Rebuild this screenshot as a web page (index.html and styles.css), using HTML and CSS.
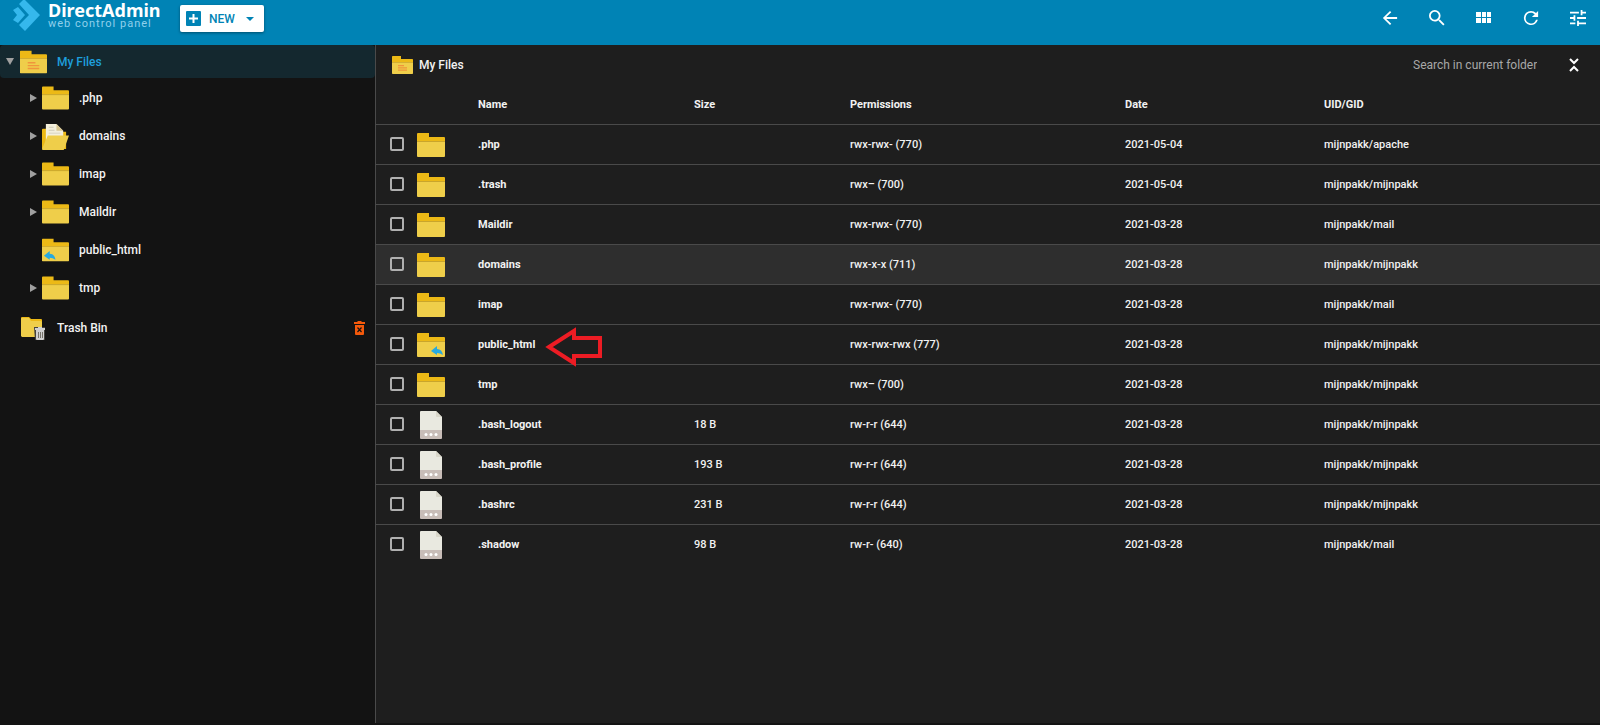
FILE: index.html
```html
<!DOCTYPE html>
<html lang="en">

<head>
	<meta charset="UTF-8">
	<meta name="viewport" content="width=device-width, initial-scale=1.0">
	<title>DirectAdmin - My Files</title>
	<link rel="stylesheet" href="styles.css">
</head>

<body>
	<svg class="sprite" aria-hidden="true">
		<symbol id="folder" viewBox="0 0 28 24">
			<path fill="#ecb916" d="M0 1Q0 0 1 0H12V4H27Q28 4 28 5V9H0Z" />
			<path fill="#efce4a" d="M0 8H28V23Q28 24 27 24H1Q0 24 0 23Z" />
			<path fill="#c9a52c" d="M0 8H28V9H0Z" />
		</symbol>
		<symbol id="folder-home" viewBox="0 0 28 24">
			<use href="#folder" />
			<path fill="#f0953c" d="M8 12H16V13.500H8ZM8 15H20V16.500H8ZM8 18H20V19.500H8Z" />
		</symbol>
		<symbol id="folder-link" viewBox="0 0 28 24">
			<use href="#folder" />
			<path fill="#27a9e0" d="M14 18L20 13V16Q25 16 26 22Q23 20 20 20V22Z" />
		</symbol>
		<symbol id="folder-link-left" viewBox="0 0 28 24">
			<use href="#folder" />
			<path fill="#27a9e0" d="M2 18L8 13V16Q13 16 14 22Q11 20 8 20V22Z" />
		</symbol>
		<symbol id="folder-open" viewBox="0 0 28 28">
			<path fill="#ecb916" d="M0 7Q0 6 1 6H12V9H25V27H1Q0 27 0 26Z" />
			<path fill="#f3efdc" d="M4 1H15L22 8V20H4Z" />
			<path fill="#d8c690" d="M15 1L22 8H15Z" />
			<path fill="#cfcbb8" d="M7 4H12V5H7ZM7 7H13V8H7ZM7 10H19V11H7Z" />
			<path fill="#efce4a" d="M0 27L6 13H28L23 27Q23 28 22 28H1Q0 28 0 27Z" />
		</symbol>
		<symbol id="folder-trash" viewBox="0 0 24 23">
			<path fill="#ecb916" d="M0 1Q0 0 1 0H8L10 2H20Q21 2 21 3V12H0Z" />
			<path fill="#efce4a" d="M0 2Q0 1 1 1H8L10 4H20L21 5V19L20 20H1L0 19Z" />
			<path fill="#44423c" d="M13 10H24V23H14Z" />
			<path fill="#d0d0d0" d="M14 11H17V10H21V11H24V13H14ZM15 13H23V22Q23 23 22 23H16Q15 23 15 22Z" />
			<path fill="#77736a" d="M17 15H18V21H17ZM19 15H20V21H19ZM21 15H22V21H21Z" />
		</symbol>
		<symbol id="file" viewBox="0 0 22 28">
			<path fill="#e9e9e0" d="M1 0H16L22 6V20H0V1Q0 0 1 0Z" />
			<path fill="#d9d7ca" d="M16 0L22 6H17Q16 6 16 5Z" />
			<path fill="#c8bdb8" d="M0 19H22V27Q22 28 21 28H1Q0 28 0 27Z" />
			<circle fill="#fff" cx="6" cy="23.500" r="1.500" />
			<circle fill="#fff" cx="11" cy="23.500" r="1.500" />
			<circle fill="#fff" cx="16" cy="23.500" r="1.500" />
		</symbol>
	</svg>

	<header>
		<a class="logo" href="#">
			<svg width="28" height="32" viewBox="0 0 28 32">
				<path fill="#35b8ec" d="M0 10L5 7L12 15L5 23L0 20L4 15Z" />
				<path fill="#35b8ec" d="M6 4L11 -1L27 15L12 31L6 25L16 15Z" />
			</svg>
			<span class="brand">
				<strong>DirectAdmin</strong>
				<small>web control panel</small>
			</span>
		</a>
		<button class="new">
			<svg width="15" height="15" viewBox="0 0 15 15">
				<rect width="15" height="15" rx="1" fill="#0083b5" />
				<path d="M7.500 3V12M3 7.500H12" stroke="#fff" stroke-width="2" />
			</svg>
			<span>NEW</span>
			<svg width="8" height="4" viewBox="0 0 8 4">
				<path d="M0 0H8L4 4Z" fill="#0083b5" />
			</svg>
		</button>
		<nav class="tools">
			<button aria-label="Back"><svg viewBox="3 3 18 18"><path d="M20 11H7.830l5.590-5.590L12 4l-8 8 8 8 1.410-1.410L7.830 13H20v-2z" /></svg></button>
			<button aria-label="Search"><svg viewBox="3 3 18 18"><path d="M15.500 14h-.79l-.28-.27A6.471 6.471 0 0 0 16 9.500 6.500 6.500 0 1 0 9.500 16c1.610 0 3.090-.59 4.230-1.570l.27.28v.79l5 4.990L20.490 19l-4.990-5zm-6 0C7.010 14 5 11.990 5 9.500S7.010 5 9.500 5 14 7.010 14 9.500 11.990 14 9.500 14z" /></svg></button>
			<button aria-label="Grid view"><svg viewBox="0 0 16 16"><path d="M0 2H5V7H0ZM6 2H10V7H6ZM11 2H15V7H11ZM0 8H5V13H0ZM6 8H10V13H6ZM11 8H15V13H11Z" /></svg></button>
			<button aria-label="Refresh"><svg viewBox="3 3 18 18"><path d="M17.650 6.350A7.958 7.958 0 0 0 12 4a8 8 0 1 0 7.730 10h-2.080A6 6 0 1 1 12 6c1.660 0 3.140.69 4.220 1.780L13 11h7V4l-2.350 2.350z" /></svg></button>
			<button aria-label="Settings"><svg viewBox="3 3 18 18"><path d="M3 17v2h6v-2H3zM3 5v2h10V5H3zm10 16v-2h8v-2h-8v-2h-2v6h2zM7 9v2H3v2h4v2h2V9H7zm14 4v-2H11v2h10zm-6-4h2V7h4V5h-4V3h-2v6z" /></svg></button>
		</nav>
	</header>

	<div class="content">
		<aside>
			<a class="tree-root" href="#">
				<span class="toggle toggle-open"></span>
				<svg width="27" height="24"><use href="#folder-home" /></svg>
				<span>My Files</span>
			</a>
			<ul id="tree" class="tree"></ul>
			<div class="trash">
				<a href="#"><svg width="24" height="23"><use href="#folder-trash" /></svg><span>Trash Bin</span></a>
				<button aria-label="Empty trash">
					<svg width="11" height="14" viewBox="0 0 11 14">
						<path fill="#f4590b" d="M0 1H3L4 0H7L8 1H11V3H0ZM1 4H10V13Q10 14 9 14H2Q1 14 1 13Z" />
						<path d="M3.500 6.500L7.500 11M7.500 6.500L3.500 11" stroke="#131313" stroke-width="1.200" />
					</svg>
				</button>
			</div>
		</aside>
		<main>
			<div class="bar">
				<svg width="21" height="18"><use href="#folder-home" /></svg>
				<h1>My Files</h1>
				<input type="text" placeholder="Search in current folder" aria-label="Search in current folder">
				<button aria-label="Collapse">
					<svg width="10" height="14" viewBox="0 0 10 14">
						<path d="M1 1L5 5L9 1M1 13L5 9L9 13" fill="none" stroke="#fff" stroke-width="2" />
					</svg>
				</button>
			</div>
			<table>
				<thead>
					<tr>
						<th class="col-check"></th>
						<th class="col-icon"></th>
						<th class="col-name">Name</th>
						<th class="col-size">Size</th>
						<th class="col-perm">Permissions</th>
						<th class="col-date">Date</th>
						<th class="col-owner">UID/GID</th>
					</tr>
				</thead>
				<tbody id="files"></tbody>
			</table>
		</main>
	</div>

	<script>
		const tree = [
			['.php', 'folder'],
			['domains', 'folder-open'],
			['imap', 'folder'],
			['Maildir', 'folder'],
			['public_html', 'folder-link-left'],
			['tmp', 'folder']
		];

		const files = [
			['.php', 'folder', '', 'rwx-rwx- (770)', '2021-05-04', 'mijnpakk/apache'],
			['.trash', 'folder', '', 'rwx– (700)', '2021-05-04', 'mijnpakk/mijnpakk'],
			['Maildir', 'folder', '', 'rwx-rwx- (770)', '2021-03-28', 'mijnpakk/mail'],
			['domains', 'folder', '', 'rwx-x-x (711)', '2021-03-28', 'mijnpakk/mijnpakk'],
			['imap', 'folder', '', 'rwx-rwx- (770)', '2021-03-28', 'mijnpakk/mail'],
			['public_html', 'folder-link', '', 'rwx-rwx-rwx (777)', '2021-03-28', 'mijnpakk/mijnpakk'],
			['tmp', 'folder', '', 'rwx– (700)', '2021-03-28', 'mijnpakk/mijnpakk'],
			['.bash_logout', 'file', '18 B', 'rw-r-r (644)', '2021-03-28', 'mijnpakk/mijnpakk'],
			['.bash_profile', 'file', '193 B', 'rw-r-r (644)', '2021-03-28', 'mijnpakk/mijnpakk'],
			['.bashrc', 'file', '231 B', 'rw-r-r (644)', '2021-03-28', 'mijnpakk/mijnpakk'],
			['.shadow', 'file', '98 B', 'rw-r- (640)', '2021-03-28', 'mijnpakk/mail']
		];

		const arrow = `
			<svg class="arrow" width="58" height="40" viewBox="0 0 58 40">
				<path d="M4 20L29 4V11H55V29H29V36Z" fill="none" stroke="#ed1c24" stroke-width="4" />
			</svg>`;

		document.getElementById('tree').innerHTML = tree.map(([name, icon]) => `
			<li>
				<a href="#">
					<span class="toggle ${icon === 'folder-link-left' ? '' : 'toggle-closed'}"></span>
					<svg width="27" height="${icon === 'folder-open' ? 27 : 24}"><use href="#${icon}" /></svg>
					<span>${name}</span>
				</a>
			</li>`).join('');

		document.getElementById('files').innerHTML = files.map(([name, icon, size, perm, date, owner]) => `
			<tr class="${name === 'domains' ? 'active' : ''}">
				<td class="col-check"><input type="checkbox" aria-label="${name}"></td>
				<td class="col-icon"><svg width="28" height="${icon === 'file' ? 28 : 24}"><use href="#${icon}" /></svg></td>
				<td class="col-name"><div class="name">${name}${name === 'public_html' ? arrow : ''}</div></td>
				<td>${size}</td>
				<td>${perm}</td>
				<td>${date}</td>
				<td>${owner}</td>
			</tr>`).join('');
	</script>
</body>

</html>
```
FILE: styles.css
```css
* {
	box-sizing: border-box;
}

body {
	margin: 0;
	min-height: 100vh;
	display: flex;
	flex-direction: column;
	background: #131313;
	color: #f2f2f2;
	font: 500 12px/16px Roboto, "Liberation Sans", sans-serif;
}

svg {
	display: block;
	flex: none;
}

a {
	color: inherit;
	text-decoration: none;
}

button {
	padding: 0;
	border: 0;
	background: none;
	font: inherit;
	cursor: pointer;
}

.sprite {
	position: absolute;
	width: 0;
	height: 0;
}

header {
	height: 45px;
	display: flex;
	align-items: flex-start;
	background: #0083b5;
}

.logo {
	width: 180px;
	padding-left: 13px;
	display: flex;
	gap: 7px;
}

.brand strong,
.brand small {
	display: block;
	white-space: nowrap;
}

.brand strong {
	color: #fff;
	font: 700 18px/20px "Noto Sans", sans-serif;
}

.brand small {
	color: #8fd0ec;
	font: 400 11px/8px Roboto, sans-serif;
	letter-spacing: 1px;
}

.new {
	width: 84px;
	height: 27px;
	margin-top: 5px;
	padding: 0 10px 0 6px;
	display: flex;
	align-items: center;
	border-radius: 2px;
	background: #fff;
	box-shadow: 0 1px 3px rgba(0, 0, 0, .4);
	color: #0083b5;
}

.new span {
	margin: 0 auto 0 8px;
}

.tools {
	margin-left: auto;
	padding: 10px 14px 0 0;
	display: flex;
	gap: 31px;
}

.tools svg {
	width: 16px;
	height: 16px;
	fill: #fff;
}

.content {
	flex: 1;
	display: flex;
	padding-bottom: 2px;
}

aside {
	width: 376px;
	flex: none;
	border-right: 1px solid #4a4a4a;
}

.toggle {
	width: 7px;
	flex: none;
}

.toggle::before {
	content: "";
	display: block;
	width: 0;
	border: 4px solid transparent;
}

.toggle-open::before {
	border-width: 7px 4px 0;
	border-top-color: #a0a0a0;
}

.toggle-closed::before {
	border-width: 4px 0 4px 7px;
	border-left-color: #a0a0a0;
}

.tree-root {
	height: 33px;
	padding-left: 6px;
	display: flex;
	align-items: center;
	border-radius: 4px;
	background: #14282f;
	color: #1e9fdc;
}

.tree-root svg {
	margin: 0 10px 0 7px;
}

.tree {
	margin: 0;
	padding: 1px 0 0 30px;
	list-style: none;
}

.tree a {
	height: 38px;
	display: flex;
	align-items: center;
}

.tree svg {
	margin: 0 10px 0 5px;
}

.trash {
	height: 42px;
	padding: 0 10px 0 21px;
	display: flex;
	align-items: center;
	justify-content: space-between;
}

.trash a {
	display: flex;
	align-items: center;
	gap: 12px;
}

main {
	flex: 1;
	min-width: 0;
	background: #1e1e1e;
}

.bar {
	height: 39px;
	padding: 0 21px 0 16px;
	display: flex;
	align-items: center;
}

.bar h1 {
	margin: 0 0 0 6px;
	font: inherit;
}

.bar input {
	width: 124px;
	margin: 0 32px 0 auto;
	padding: 0;
	border: 0;
	outline: 0;
	background: none;
	color: #fff;
	font: 400 12px/16px Roboto, sans-serif;
}

.bar input::placeholder {
	color: #a8a8a8;
}

table {
	width: 100%;
	table-layout: fixed;
	border-collapse: collapse;
}

th,
td {
	height: 40px;
	padding: 2px 0 0;
	border-bottom: 1px solid #4a4a4a;
	text-align: left;
	font-size: 11px;
	font-weight: 500;
	white-space: nowrap;
}

th,
.name {
	font-weight: 700;
}

tbody tr:last-child td {
	border-bottom: 0;
}

.active {
	background: #2e2e2e;
}

.col-check {
	width: 41px;
	padding: 0 0 0 14px;
}

.col-icon {
	width: 61px;
}

.col-name {
	width: 216px;
}

.col-size {
	width: 156px;
}

.col-perm {
	width: 275px;
}

.col-date {
	width: 199px;
}

.col-owner {
	width: 276px;
}

td input {
	appearance: none;
	display: block;
	width: 14px;
	height: 14px;
	margin: 0;
	border: 2px solid #b0b0b0;
	border-radius: 2px;
}

.name {
	position: relative;
}

/* sits over the row, a bit taller than the text */
.arrow {
	position: absolute;
	left: 67px;
	top: -10px;
}
```
